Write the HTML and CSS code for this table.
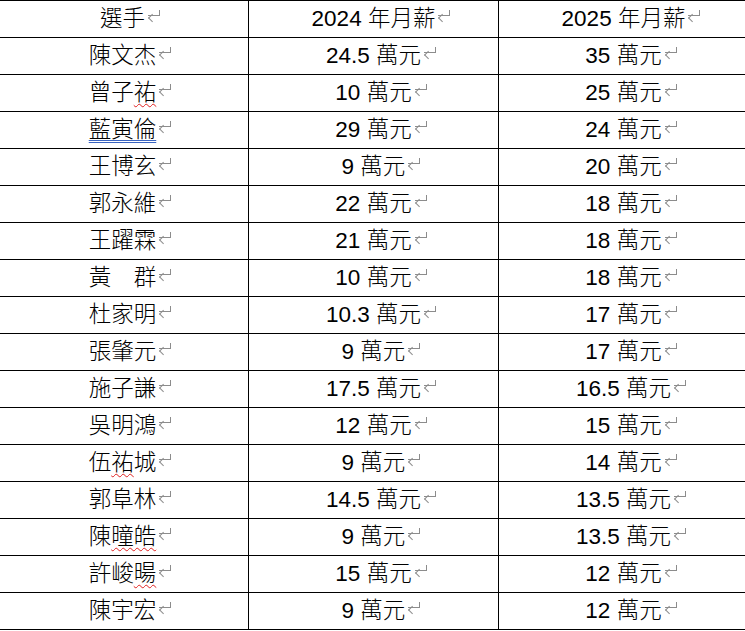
FILE: index.html
```html
<!DOCTYPE html>
<html lang="zh-Hant">
<head>
<meta charset="utf-8">
<title>選手月薪</title>
<link rel="stylesheet" href="styles.css">
</head>
<body>
<table class="salary">
  <colgroup><col class="c1"><col class="c2"><col class="c3"></colgroup>
  <tbody>
    <tr><td>選手<span class="pm"></span></td><td>2024 年月薪<span class="pm"></span></td><td>2025 年月薪<span class="pm"></span></td></tr>
    <tr><td>陳文杰<span class="pm"></span></td><td>24.5 萬元<span class="pm"></span></td><td>35 萬元<span class="pm"></span></td></tr>
    <tr><td>曾子<span class="sp">祐</span><span class="pm"></span></td><td>10 萬元<span class="pm"></span></td><td>25 萬元<span class="pm"></span></td></tr>
    <tr><td><span class="gr">藍寅倫</span><span class="pm"></span></td><td>29 萬元<span class="pm"></span></td><td>24 萬元<span class="pm"></span></td></tr>
    <tr><td>王博玄<span class="pm"></span></td><td>9 萬元<span class="pm"></span></td><td>20 萬元<span class="pm"></span></td></tr>
    <tr><td>郭永維<span class="pm"></span></td><td>22 萬元<span class="pm"></span></td><td>18 萬元<span class="pm"></span></td></tr>
    <tr><td>王躍霖<span class="pm"></span></td><td>21 萬元<span class="pm"></span></td><td>18 萬元<span class="pm"></span></td></tr>
    <tr><td>黃　群<span class="pm"></span></td><td>10 萬元<span class="pm"></span></td><td>18 萬元<span class="pm"></span></td></tr>
    <tr><td>杜家明<span class="pm"></span></td><td>10.3 萬元<span class="pm"></span></td><td>17 萬元<span class="pm"></span></td></tr>
    <tr><td>張肇元<span class="pm"></span></td><td>9 萬元<span class="pm"></span></td><td>17 萬元<span class="pm"></span></td></tr>
    <tr><td>施子謙<span class="pm"></span></td><td>17.5 萬元<span class="pm"></span></td><td>16.5 萬元<span class="pm"></span></td></tr>
    <tr><td>吳明鴻<span class="pm"></span></td><td>12 萬元<span class="pm"></span></td><td>15 萬元<span class="pm"></span></td></tr>
    <tr><td>伍<span class="sp">祐</span>城<span class="pm"></span></td><td>9 萬元<span class="pm"></span></td><td>14 萬元<span class="pm"></span></td></tr>
    <tr><td>郭阜林<span class="pm"></span></td><td>14.5 萬元<span class="pm"></span></td><td>13.5 萬元<span class="pm"></span></td></tr>
    <tr><td>陳<span class="sp">曈皓</span><span class="pm"></span></td><td>9 萬元<span class="pm"></span></td><td>13.5 萬元<span class="pm"></span></td></tr>
    <tr><td>許峻<span class="sp">暘</span><span class="pm"></span></td><td>15 萬元<span class="pm"></span></td><td>12 萬元<span class="pm"></span></td></tr>
    <tr><td>陳宇宏<span class="pm"></span></td><td>9 萬元<span class="pm"></span></td><td>12 萬元<span class="pm"></span></td></tr>
  </tbody>
</table>
</body>
</html>
```
FILE: styles.css
```css
html, body {
  margin: 0;
  padding: 0;
  background: #ffffff;
}
body {
  overflow: hidden;
}
.salary {
  border-collapse: collapse;
  table-layout: fixed;
  width: 752px;
  margin-left: -4px;
  font-family: "Liberation Sans", "Noto Sans CJK TC", sans-serif;
  font-size: 22.5px;
  font-weight: 300;
  color: #000000;
}
.salary col.c1 { width: 252px; }
.salary col.c2 { width: 250px; }
.salary col.c3 { width: 250px; }
.salary td {
  border: 1px solid #000000;
  height: 36px;
  padding: 0;
  text-align: center;
  vertical-align: middle;
  line-height: 24px;
  white-space: nowrap;
}
.pm {
  display: inline-block;
  position: relative;
  width: 15px;
  height: 10px;
  margin-left: 1px;
  margin-right: -16px;
  vertical-align: 6px;
  background:
    linear-gradient(#8c8c8c, #8c8c8c) 13px 0 / 1px 6px no-repeat,
    linear-gradient(#8c8c8c, #8c8c8c) 2px 5px / 12px 1px no-repeat;
}
.pm::before {
  content: "";
  position: absolute;
  left: 2px;
  top: 2px;
  width: 5px;
  height: 5px;
  border-left: 1px solid #8c8c8c;
  border-bottom: 1px solid #8c8c8c;
  transform: rotate(45deg);
  transform-origin: 0 100%;
}
.sp {
  text-decoration-line: underline;
  text-decoration-style: wavy;
  text-decoration-color: #e02020;
  text-decoration-thickness: 1px;
  text-underline-offset: 3px;
}
.gr {
  text-decoration-line: underline;
  text-decoration-style: double;
  text-decoration-color: #3a64c0;
  text-decoration-thickness: 1px;
  text-underline-offset: 3px;
}
```
